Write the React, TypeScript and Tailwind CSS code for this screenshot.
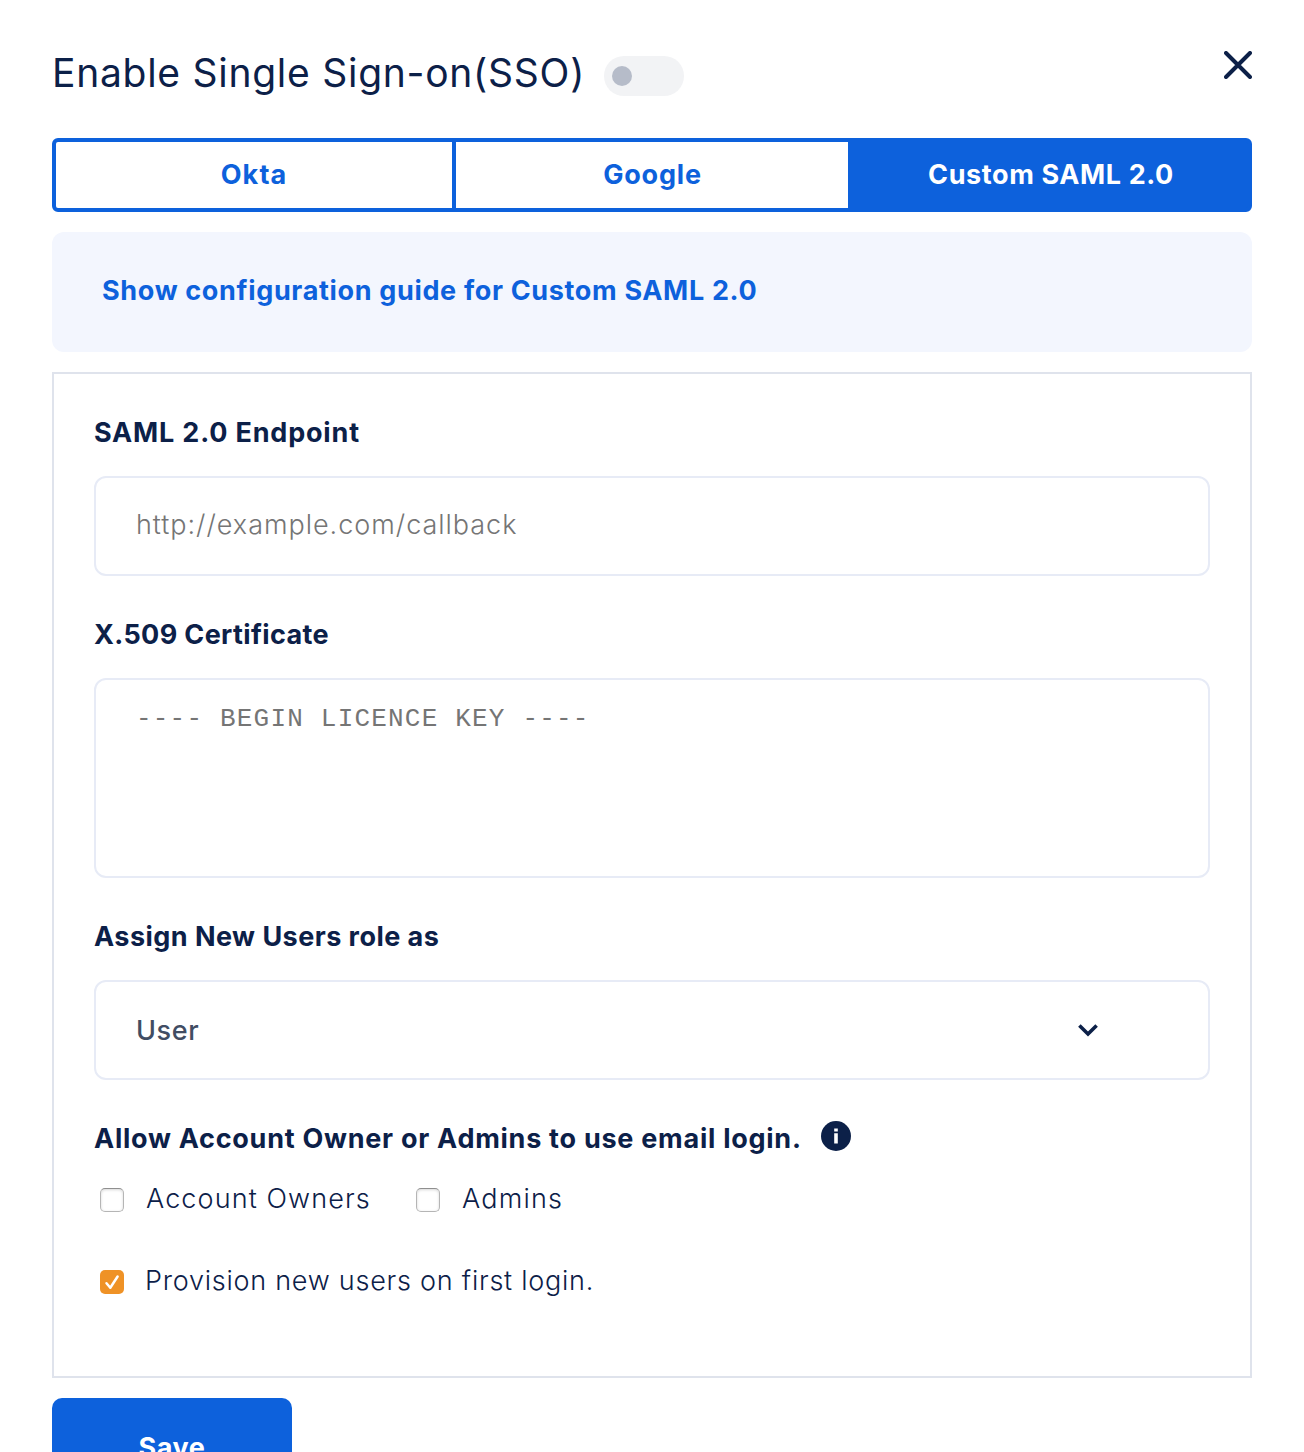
import type { ReactNode } from "react";

function Label({ children, spacing }: { children: ReactNode; spacing: string }) {
  return (
    <div className={`h-[34px] text-[27px] leading-[34px] font-bold whitespace-nowrap ${spacing}`}>{children}</div>
  );
}

function Checkbox({ checked = false }: { checked?: boolean }) {
  return checked ? (
    <span className="flex size-6 shrink-0 items-center justify-center rounded-[5px] bg-[#ef9226]">
      <svg width="24" height="24" viewBox="0 0 24 24" fill="none" stroke="#fff" strokeWidth="2.5" strokeLinecap="round" strokeLinejoin="round">
        <path d="M6.5 13.2 10.3 17.8 17.6 6.5" />
      </svg>
    </span>
  ) : (
    <span className="size-6 shrink-0 rounded-[5px] border border-[#b5b5b5] border-t-[#8f8f8f] bg-white shadow-[inset_0_1px_3px_rgba(0,0,0,0.16)]" />
  );
}

export default function App() {
  return (
    <div className="h-[1452px] w-[1304px] overflow-hidden bg-white px-[52px] pt-[46px] font-['Inter',sans-serif] text-[#0c2048] [font-variant-ligatures:none]">
      <header className="flex h-[92px] items-start justify-between">
        <div className="flex items-start">
          <h1 className="w-[552px] text-[39px] leading-[54px] font-normal tracking-[0.73px] whitespace-nowrap">
            Enable Single Sign-on(SSO)
          </h1>
          <span className="mt-[10px] flex h-10 w-20 items-center rounded-full bg-[#f2f3f5] pl-2">
            <span className="size-5 rounded-full bg-[#b6bcc9]" />
          </span>
        </div>
        <svg className="mt-[5px]" width="28" height="28" viewBox="0 0 28 28" stroke="#0c2048" strokeWidth="4" strokeLinecap="round">
          <path d="M2 2 26 26M26 2 2 26" />
        </svg>
      </header>

      <nav className="flex h-[74px] overflow-hidden rounded-[6px] border-4 border-[#0d61dc] bg-[#0d61dc] text-[27px] leading-[66px] font-bold text-[#0d61dc]">
        <div className="w-[400px] border-r-4 border-[#0d61dc] bg-white text-center tracking-[1.1px]">Okta</div>
        <div className="w-[392px] bg-white pl-px text-center tracking-[0.8px]">Google</div>
        <div className="flex-1 pl-[6px] text-center tracking-[0.6px] text-white">Custom SAML 2.0</div>
      </nav>

      <div className="mt-5 h-[120px] rounded-xl bg-[#f3f6fe] pt-[42px] pl-[50px]">
        <a className="block text-[27px] leading-[34px] font-bold tracking-[0.66px] whitespace-nowrap text-[#0d61dc]">
          Show configuration guide for Custom SAML 2.0
        </a>
      </div>

      <section className="mt-5 h-[1006px] border-2 border-[#dfe3ec] px-10 pt-[42px]">
        <Label spacing="tracking-[0.82px]">SAML 2.0 Endpoint</Label>
        <div className="mt-[26px] flex h-[100px] items-center rounded-xl border-2 border-[#e7ebf6] pb-[3px] pl-[40px] text-[27px] leading-[34px] font-light tracking-[0.97px] text-[#757575]">
          http://example.com/callback
        </div>

        <div className="mt-[42px]">
          <Label spacing="tracking-[0.36px]">X.509 Certificate</Label>
        </div>
        <div className="mt-[26px] h-[200px] rounded-xl border-2 border-[#e7ebf6] pt-[23px] pl-10 font-['Liberation_Mono',monospace] text-[26px] leading-[32px] tracking-[1.2px] whitespace-pre text-[#757575]">
          ---- BEGIN LICENCE KEY ----
        </div>

        <div className="mt-[42px]">
          <Label spacing="tracking-[0.46px]">Assign New Users role as</Label>
        </div>
        <div className="mt-[26px] flex h-[100px] items-center justify-between rounded-xl border-2 border-[#e7ebf6] pr-[110px] pl-[40px] text-[27px] leading-[34px] font-medium tracking-[0.6px] text-[#414d63]">
          <span className="pt-[2px]">User</span>
          <svg width="20" height="14" viewBox="0 0 20 14" fill="none" stroke="#0c2048" strokeWidth="3.6">
            <path d="M1.4 2.4 10 11 18.6 2.4" />
          </svg>
        </div>

        <div className="mt-[42px] flex">
          <Label spacing="tracking-[0.74px]">Allow Account Owner or Admins to use email login.</Label>
          <svg className="-mt-px ml-[19px]" width="30" height="30" viewBox="0 0 30 30">
            <circle cx="15" cy="15" r="15" fill="#0c2048" />
            <path d="M13.2 7.4h3.6v3h-3.6zM13.2 12.3h3.6v10.2h-3.6z" fill="#fff" />
          </svg>
        </div>
        <div className="mt-[27px] flex h-[34px] items-center pl-[6px] text-[27px] leading-[34px] font-light">
          <Checkbox />
          <span className="-mt-[3px] ml-[22px] w-[270px] tracking-[1.1px] whitespace-nowrap">Account Owners</span>
          <Checkbox />
          <span className="-mt-[3px] ml-[22px] tracking-[1.2px]">Admins</span>
        </div>
        <div className="mt-[48px] flex h-[34px] items-center pl-[6px] text-[27px] leading-[34px] font-light">
          <Checkbox checked />
          <span className="-mt-[3px] ml-[21px] tracking-[0.75px] whitespace-nowrap">Provision new users on first login.</span>
        </div>
      </section>

      <button className="mt-5 block h-[100px] w-60 rounded-[10px] bg-[#0d61dc] text-[27px] leading-[98px] font-bold tracking-[0.6px] text-white">
        Save
      </button>
    </div>
  );
}
